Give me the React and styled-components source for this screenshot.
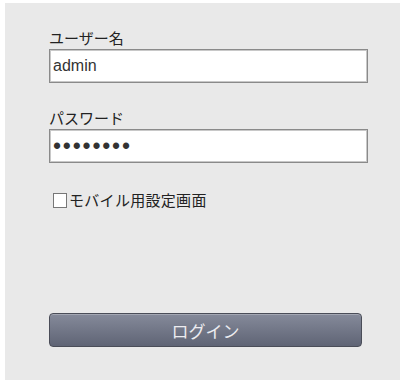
import React from 'react';
import styled, { createGlobalStyle } from 'styled-components';

const Global = createGlobalStyle`
  html, body {
    margin: 0;
    padding: 0;
    background: #ffffff;
  }
  body {
    font-family: "Noto Sans CJK JP", "Liberation Sans", sans-serif;
  }
`;

const Panel = styled.div`
  box-sizing: border-box;
  margin: 3px 10px 0 5px;
  width: 395px;
  height: 377px;
  background: #e9e9e9;
  padding: 26px 0 0 44px;
  display: flex;
  flex-direction: column;
`;

const Label = styled.label`
  font-size: 15px;
  line-height: 18px;
  color: #222;
  margin-top: ${(p) => p.$top || 0}px;
  margin-bottom: 2px;
`;

const Field = styled.input`
  box-sizing: border-box;
  width: 319px;
  height: 34px;
  margin: 0;
  border: 1px solid #8a8a8a;
  box-shadow: inset 0 0 0 1px #c8c8c8;
  background: #ffffff;
  padding: 0 3px;
  font-family: "Liberation Sans", Arial, sans-serif;
  font-size: ${(p) => (p.type === 'password' ? '23px' : '16px')};
  color: #333;
  outline: none;
  letter-spacing: ${(p) => (p.type === 'password' ? '1.8px' : '0')};
`;

const CheckRow = styled.label`
  display: flex;
  align-items: center;
  margin: 26px 0 0 4px;
  font-size: 15px;
  line-height: 22px;
  color: #222;
  letter-spacing: 0.3px;
`;

const Box = styled.span`
  box-sizing: border-box;
  width: 14px;
  height: 15px;
  border: 1px solid #777;
  background: #fff;
  margin-right: 2px;
`;

const Button = styled.button`
  box-sizing: border-box;
  width: 313px;
  height: 34px;
  margin-top: 102px;
  border: 1px solid #4a4d58;
  border-radius: 4px;
  background: linear-gradient(#858a9a, #5f6475);
  box-shadow: inset 0 1px 0 rgba(255, 255, 255, 0.25);
  color: #ececf0;
  font-family: "Noto Sans CJK JP", sans-serif;
  font-size: 17px;
  cursor: pointer;
  padding: 0;
`;

export default function App() {
  return (
    <>
      <Global />
      <Panel>
        <Label>ユーザー名</Label>
        <Field type="text" defaultValue="admin" />
        <Label $top={26}>パスワード</Label>
        <Field type="password" defaultValue="12345678" />
        <CheckRow>
          <Box />
          モバイル用設定画面
        </CheckRow>
        <Button>ログイン</Button>
      </Panel>
    </>
  );
}
